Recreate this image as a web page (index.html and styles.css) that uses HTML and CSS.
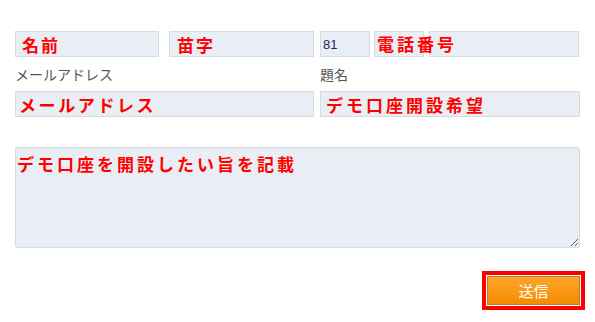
FILE: index.html
```html
<!DOCTYPE html>
<html lang="ja">
<head>
<meta charset="utf-8">
<title>お問い合わせ</title>
<link rel="stylesheet" href="styles.css">
</head>
<body>
<form class="form">
  <div class="row row-top">
    <input class="field field-name mark" type="text" value="名前" readonly>
    <input class="field field-surname mark" type="text" value="苗字" readonly>
    <div class="phone">
      <input class="field field-cc" type="text" value="81" readonly>
      <input class="field field-area" type="text" readonly>
      <input class="field field-num" type="text" readonly>
      <span class="phone-mark">電話番号</span>
    </div>
  </div>
  <div class="row labels">
    <label class="label label-mail">メールアドレス</label>
    <label class="label">題名</label>
  </div>
  <div class="row row-mid">
    <input class="field field-mail mark" type="text" value="メールアドレス" readonly>
    <input class="field field-subject mark" type="text" value="デモ口座開設希望" readonly>
  </div>
  <textarea class="field message mark" readonly>デモ口座を開設したい旨を記載</textarea>
  <div class="submit-row">
    <div class="submit-frame">
      <button class="submit" type="button">送信</button>
    </div>
  </div>
</form>
</body>
</html>
```
FILE: styles.css
```css
html, body {
  margin: 0;
  padding: 0;
  background: #ffffff;
}
body {
  font-family: "Noto Sans CJK JP", "Noto Sans", sans-serif;
}
.form {
  width: 565px;
  padding: 31px 0 0 15px;
}
.row {
  display: flex;
}
.field {
  box-sizing: border-box;
  margin: 0;
  border: 1px solid #d6dbe1;
  background: #e9eef4;
  height: 26px;
  padding: 0 5px;
  outline: none;
  font-family: "Noto Sans CJK JP", sans-serif;
}
.mark {
  color: #ff0000;
  font-weight: 700;
  font-size: 17px;
  letter-spacing: 2px;
}
.field-name { width: 144px; padding-left: 6px; }
.field-surname { width: 145px; margin-left: 10px; padding-left: 7px; }
.phone {
  position: relative;
  display: flex;
  margin-left: 6px;
}
.field-cc {
  width: 50px;
  padding: 0 2px;
  font-family: "Liberation Sans", Arial, sans-serif;
  font-size: 13px;
  color: #1c2456;
}
.field-area { width: 50px; margin-left: 4px; }
.field-num { width: 150px; margin-left: 5px; }
.phone-mark {
  position: absolute;
  left: 57px;
  top: 0;
  line-height: 26px;
  color: #ff0000;
  font-weight: 700;
  font-size: 17px;
  letter-spacing: 3px;
}
.labels {
  margin-top: 8px;
  height: 18px;
}
.label {
  font-size: 14px;
  line-height: 18px;
  color: #555555;
}
.label-mail { width: 305px; }
.row-mid { margin-top: 8px; }
.field-mail { width: 299px; padding-left: 3px; letter-spacing: 2.6px; }
.field-subject { width: 260px; margin-left: 6px; letter-spacing: 3px; }
.message {
  display: block;
  width: 565px;
  height: 101px;
  margin-top: 30px;
  padding: 5px 1px;
  border-radius: 3px;
  letter-spacing: 3px;
  line-height: 22px;
  resize: both;
}
.submit-row {
  display: flex;
  justify-content: flex-end;
  width: 570px;
  margin-top: 23px;
}
.submit-frame {
  border: 4px solid #ff0000;
  padding: 1px;
}
.submit {
  display: block;
  width: 93px;
  height: 29px;
  margin: 0;
  border: 1px solid #b97a32;
  background: linear-gradient(#ffa62b, #f58c00);
  color: #ffffff;
  font-family: "Noto Sans CJK JP", sans-serif;
  font-size: 15px;
  padding: 0;
}
```
